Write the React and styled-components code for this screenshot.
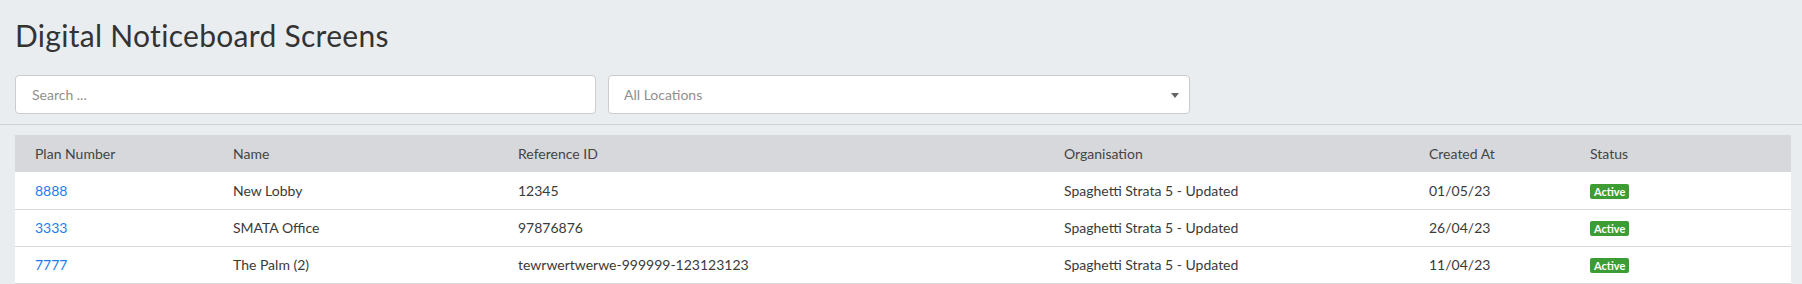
import React from "react";
import styled, { createGlobalStyle } from "styled-components";

const GlobalStyle = createGlobalStyle`
  html, body {
    margin: 0;
    padding: 0;
    background: #eaedf0;
    font-family: Lato, "Open Sans", Arial, sans-serif;
    color: #333;
  }
  * { box-sizing: border-box; }
`;

const Header = styled.header`
  padding: 18px 15px 10px;
  border-bottom: 1px solid #cfd1d4;
`;

const Title = styled.h1`
  margin: 0 0 23px;
  font-size: 30px;
  line-height: 34px;
  letter-spacing: 0.3px;
  font-weight: 400;
  color: #333;
`;

const Filters = styled.div`
  display: flex;
  gap: 12px;
`;

const SearchInput = styled.input`
  width: 581px;
  height: 39px;
  padding: 0 16px;
  border: 1px solid #cccccc;
  border-radius: 4px;
  background: #fff;
  font-family: Lato, Arial, sans-serif;
  font-size: 14px;
  color: #333;
  outline: none;
  &::placeholder { color: #8f8f8f; }
`;

const SelectBox = styled.div`
  width: 582px;
  height: 39px;
  padding: 0 10px 0 15px;
  border: 1px solid #cccccc;
  border-radius: 4px;
  background: #fff;
  display: flex;
  align-items: center;
  justify-content: space-between;
  font-size: 14px;
  color: #8f8f8f;
`;

const Caret = styled.span`
  width: 0;
  height: 0;
  border-left: 4px solid transparent;
  border-right: 4px solid transparent;
  border-top: 5px solid #666;
  margin-top: 2px;
`;

const Content = styled.main`
  padding: 10px 11px 0 15px;
`;

const Table = styled.table`
  width: 100%;
  border-collapse: collapse;
  table-layout: fixed;
  background: #fff;
  font-size: 14px;
`;

const HeadRow = styled.tr`
  height: 37px;
  background: #d6d8dc;
`;

const Th = styled.th`
  text-align: left;
  font-weight: 400;
  color: #444;
  padding: 0 20px;
  white-space: nowrap;
`;

const Row = styled.tr`
  height: 37px;
  border-bottom: 1px solid #d9d9d9;
`;

const Td = styled.td`
  padding: 0 20px;
  color: #3a3a3a;
  white-space: nowrap;
`;

const PlanLink = styled.a`
  color: #1a7ef2;
  text-decoration: none;
`;

const Badge = styled.span`
  display: inline-block;
  background: #3e9c35;
  color: #fff;
  font-size: 11px;
  font-weight: 700;
  line-height: 15px;
  padding: 0 4px;
  border-radius: 2px;
  vertical-align: middle;
`;

const columns = [
  { label: "Plan Number", width: 198 },
  { label: "Name", width: 285 },
  { label: "Reference ID", width: 546 },
  { label: "Organisation", width: 365 },
  { label: "Created At", width: 161 },
  { label: "Status", width: 221 },
];

const rows = [
  { plan: "8888", name: "New Lobby", ref: "12345", org: "Spaghetti Strata 5 - Updated", created: "01/05/23", status: "Active" },
  { plan: "3333", name: "SMATA Office", ref: "97876876", org: "Spaghetti Strata 5 - Updated", created: "26/04/23", status: "Active" },
  { plan: "7777", name: "The Palm (2)", ref: "tewrwertwerwe-999999-123123123", org: "Spaghetti Strata 5 - Updated", created: "11/04/23", status: "Active" },
];

export default function App() {
  return (
    <>
      <GlobalStyle />
      <Header>
        <Title>Digital Noticeboard Screens</Title>
        <Filters>
          <SearchInput placeholder="Search ..." />
          <SelectBox>
            <span>All Locations</span>
            <Caret />
          </SelectBox>
        </Filters>
      </Header>
      <Content>
        <Table>
          <colgroup>
            {columns.map((c) => (
              <col key={c.label} style={{ width: c.width }} />
            ))}
          </colgroup>
          <thead>
            <HeadRow>
              {columns.map((c) => (
                <Th key={c.label}>{c.label}</Th>
              ))}
            </HeadRow>
          </thead>
          <tbody>
            {rows.map((r) => (
              <Row key={r.plan}>
                <Td><PlanLink href="#">{r.plan}</PlanLink></Td>
                <Td>{r.name}</Td>
                <Td>{r.ref}</Td>
                <Td>{r.org}</Td>
                <Td>{r.created}</Td>
                <Td><Badge>{r.status}</Badge></Td>
              </Row>
            ))}
          </tbody>
        </Table>
      </Content>
    </>
  );
}
